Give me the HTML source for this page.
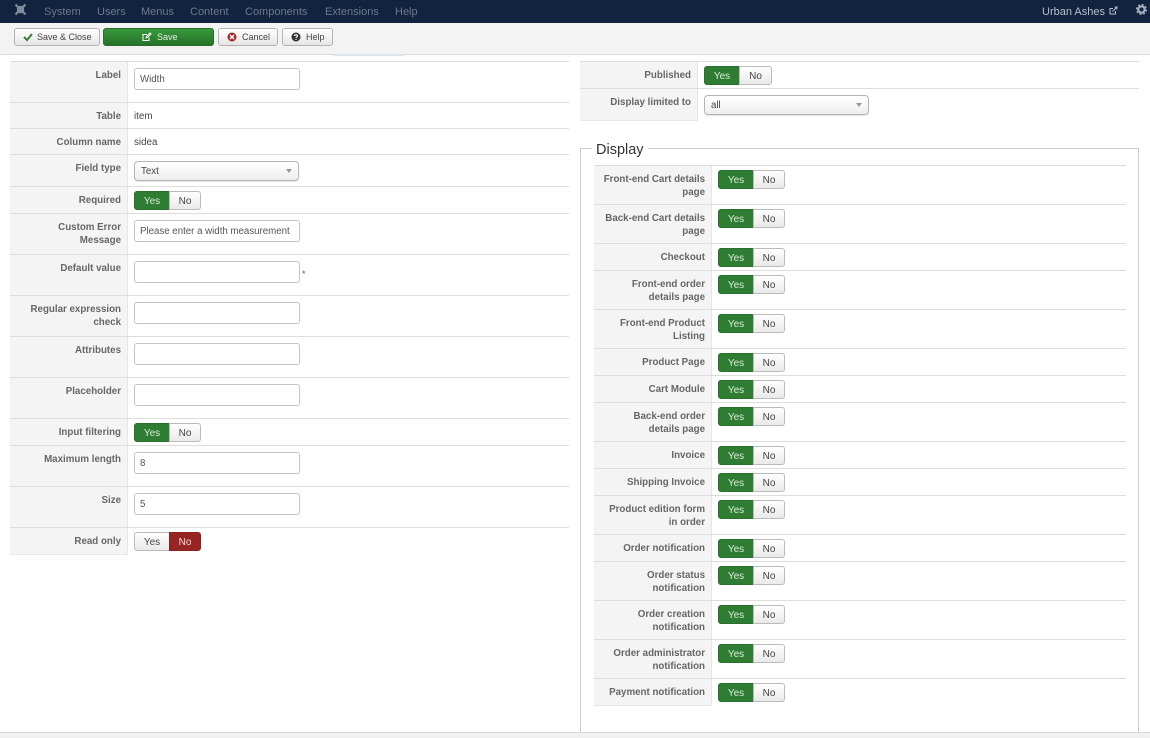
<!DOCTYPE html>
<html><head><meta charset="utf-8"><title>Field</title>
<style>
*{box-sizing:border-box}
html,body{margin:0;padding:0;width:1150px;height:738px;overflow:hidden;background:#fff;font-family:"Liberation Sans",sans-serif;font-size:10px;color:#555}
div,span{position:absolute}
#nav{left:0;top:0;width:1150px;height:23px;background:#11233f}
#nav span{top:6px;font-size:11px;line-height:13px;color:#6d7a8c;white-space:nowrap}
#bar{left:0;top:23px;width:1150px;height:32px;background:#f3f3f3;border-bottom:1px solid #dcdcdc}
.btn{top:28px;height:18px;border:1px solid #b3b3b3;border-radius:3px;background:linear-gradient(#fff,#e6e6e6);font-size:9px;line-height:16px;color:#444;white-space:nowrap}
.btn span{top:0;line-height:16px}
.btn svg{position:absolute}
.g{background:#2f8232;background:linear-gradient(#379a3b,#267129);border-color:#2a6b2d;color:#e4f0e4}
.h{height:1px;background:#ddd}
.side{background:#f4f4f4;border-right:1px solid #e6e6e6}
.l{font-size:9.75px;font-weight:bold;line-height:13px;color:#666;text-align:right;white-space:nowrap;margin-top:1px}
.in{left:134px;width:166px;height:22px;border:1px solid #c4c4c4;border-radius:3px;background:#fff;font-size:9.7px;line-height:22px;padding-left:5px;color:#555;white-space:nowrap}
.v{left:134px;font-size:9.8px;line-height:13px;color:#444;margin-top:1px}
.sel{height:20px;border:1px solid #b5b5b5;border-radius:4px;background:linear-gradient(#fff,#eee);box-shadow:0 1px 1px #e4e4e4;font-size:9.7px;line-height:20px;padding-left:6px;color:#444}
.sel i{position:absolute;right:6px;top:7px;width:0;height:0;border:3px solid transparent;border-top:4px solid #999;border-bottom:0}
.t{height:19px;width:67px;font-size:10px;line-height:19px;text-align:center}
.y,.n{top:0;height:19px;line-height:19px}
.y{left:0;width:36px;background:#2e7d32;color:#dcebdc;border-radius:3px 0 0 3px;border:1px solid #2a6f2d}
.n{left:35px;width:32px;background:linear-gradient(#fff,#e9e9e9);border:1px solid #bbb;border-radius:0 3px 3px 0;color:#444}
.y2{left:0;width:36px;background:linear-gradient(#fff,#e9e9e9);color:#444;border:1px solid #bbb;border-radius:3px 0 0 3px}
.n2{left:35px;width:32px;background:#962523;color:#f3dddd;border:1px solid #8c2220;border-radius:0 3px 3px 0}
</style></head><body>
<div id="nav">
<svg style="position:absolute;left:14px;top:3px" width="13" height="13" viewBox="0 0 13 13"><path d="M1.5 1.5L11.5 11.5M11.5 1.5L1.5 11.5M4 4H9V9H4Z" fill="none" stroke="#7f8a9a" stroke-width="2.2"/></svg>
<span style="left:44px">System</span><span style="left:97px">Users</span><span style="left:141px">Menus</span><span style="left:190px">Content</span><span style="left:245px">Components</span><span style="left:325px">Extensions</span><span style="left:395px">Help</span>
<span style="left:1042px;color:#b9c0ca">Urban Ashes</span>
<svg style="position:absolute;left:1109px;top:6px" width="9" height="9" viewBox="0 0 9 9"><path d="M6.5 5V8H1V2.5H4M3.5 5.5L8 1M5.5 1H8V3.5" fill="none" stroke="#b9c0ca" stroke-width="1"/></svg>
<svg style="position:absolute;left:1136px;top:4px" width="11" height="11" viewBox="0 0 11 11"><circle cx="5.5" cy="5.5" r="3.2" fill="none" stroke="#a9b1bd" stroke-width="2.2"/><circle cx="5.5" cy="5.5" r="4.9" fill="none" stroke="#a9b1bd" stroke-width="1.3" stroke-dasharray="2 1.85"/></svg>
</div>
<div id="bar"></div>
<div class="h" style="left:10px;top:54px;width:395px;background:#d8d8d8"></div>
<div style="left:334px;top:54px;width:71px;height:2px;background:#dde4ea"></div>

<div class="btn" style="left:14px;width:86px"><svg style="left:8px;top:3px" width="10" height="10" viewBox="0 0 10 10"><path d="M1 5L4 8L9 2" fill="none" stroke="#378137" stroke-width="2"/></svg><span style="left:22px">Save &amp; Close</span></div>
<div class="btn g" style="left:103px;width:111px"><svg style="left:38px;top:3px" width="10" height="10" viewBox="0 0 10 10"><path d="M7 5.5V8.5H1V2.5H5M4 6L4.5 4.5L8 1L9 2L5.5 5.5Z" fill="none" stroke="#fff" stroke-width="1"/></svg><span style="left:53px">Save</span></div>
<div class="btn" style="left:218px;width:60px"><svg style="left:8px;top:3px" width="10" height="10" viewBox="0 0 10 10"><circle cx="5" cy="5" r="4.5" fill="#a5282a"/><path d="M3 3L7 7M7 3L3 7" stroke="#fff" stroke-width="1.5"/></svg><span style="left:23px">Cancel</span></div>
<div class="btn" style="left:282px;width:51px"><svg style="left:8px;top:3px" width="10" height="10" viewBox="0 0 10 10"><circle cx="5" cy="5" r="4.5" fill="#333"/><path d="M3.5 4C3.5 2.5 6.5 2.5 6.5 4C6.5 5 5 5 5 6M5 7V8" fill="none" stroke="#fff" stroke-width="1.2"/></svg><span style="left:23px">Help</span></div>

<!-- Left form -->
<div class="side" style="left:10px;top:62px;width:118px;height:492px"></div>
<div class="h" style="left:10px;top:61px;width:559px"></div>
<div class="h" style="left:10px;top:102px;width:559px"></div>
<div class="h" style="left:10px;top:128px;width:559px"></div>
<div class="h" style="left:10px;top:154px;width:559px"></div>
<div class="h" style="left:10px;top:186px;width:559px"></div>
<div class="h" style="left:10px;top:213px;width:559px"></div>
<div class="h" style="left:10px;top:254px;width:559px"></div>
<div class="h" style="left:10px;top:295px;width:559px"></div>
<div class="h" style="left:10px;top:336px;width:559px"></div>
<div class="h" style="left:10px;top:377px;width:559px"></div>
<div class="h" style="left:10px;top:418px;width:559px"></div>
<div class="h" style="left:10px;top:445px;width:559px"></div>
<div class="h" style="left:10px;top:486px;width:559px"></div>
<div class="h" style="left:10px;top:527px;width:559px"></div>
<div class="h" style="left:10px;top:554px;width:118px;background:#e8e8e8"></div>

<div class="l" style="right:1029px;top:68px">Label</div>
<div class="in" style="top:68px">Width</div>
<div class="l" style="right:1029px;top:109px">Table</div>
<div class="v" style="top:109px">item</div>
<div class="l" style="right:1029px;top:135px">Column name</div>
<div class="v" style="top:135px">sidea</div>
<div class="l" style="right:1029px;top:161px">Field type</div>
<div class="sel" style="left:134px;top:161px;width:165px">Text<i></i></div>
<div class="l" style="right:1029px;top:193px">Required</div>
<div class="t" style="left:134px;top:191px"><span class="y">Yes</span><span class="n">No</span></div>
<div class="l" style="right:1029px;top:220px">Custom Error<br>Message</div>
<div class="in" style="top:220px">Please enter a width measurement</div>
<div class="l" style="right:1029px;top:261px">Default value</div>
<div class="in" style="top:261px"></div>
<div style="left:302px;top:269px;font-size:9px;color:#555">*</div>
<div class="l" style="right:1029px;top:302px">Regular expression<br>check</div>
<div class="in" style="top:302px"></div>
<div class="l" style="right:1029px;top:343px">Attributes</div>
<div class="in" style="top:343px"></div>
<div class="l" style="right:1029px;top:384px">Placeholder</div>
<div class="in" style="top:384px"></div>
<div class="l" style="right:1029px;top:425px">Input filtering</div>
<div class="t" style="left:134px;top:423px"><span class="y">Yes</span><span class="n">No</span></div>
<div class="l" style="right:1029px;top:452px">Maximum length</div>
<div class="in" style="top:452px">8</div>
<div class="l" style="right:1029px;top:493px">Size</div>
<div class="in" style="top:493px">5</div>
<div class="l" style="right:1029px;top:534px">Read only</div>
<div class="t" style="left:134px;top:532px"><span class="y y2">Yes</span><span class="n n2">No</span></div>

<!-- Right top -->
<div class="side" style="left:580px;top:62px;width:118px;height:58px"></div>
<div class="h" style="left:580px;top:61px;width:559px"></div>
<div class="h" style="left:580px;top:88px;width:559px"></div>
<div class="h" style="left:580px;top:120px;width:118px;background:#e8e8e8"></div>
<div class="l" style="right:459px;top:68px">Published</div>
<div class="t" style="left:704px;top:66px;width:68px"><span class="y">Yes</span><span class="n" style="width:33px">No</span></div>
<div class="l" style="right:459px;top:95px">Display limited to</div>
<div class="sel" style="left:704px;top:95px;width:165px">all<i></i></div>

<!-- Fieldset -->
<div style="left:580px;top:148px;width:559px;height:584px;border:1px solid #ccc;border-bottom:0"></div>
<div style="left:592px;top:141px;width:56px;height:16px;background:#fff"></div>
<div style="left:596px;top:142px;font-size:14.5px;line-height:17px;color:#333">Display</div>
<div class="side" style="left:594px;top:166px;width:118px;height:539px"></div>
<div class="h" style="left:594px;top:165px;width:532px"></div>
<div class="h" style="left:594px;top:204px;width:532px"></div>
<div class="h" style="left:594px;top:243px;width:532px"></div>
<div class="h" style="left:594px;top:270px;width:532px"></div>
<div class="h" style="left:594px;top:309px;width:532px"></div>
<div class="h" style="left:594px;top:348px;width:532px"></div>
<div class="h" style="left:594px;top:375px;width:532px"></div>
<div class="h" style="left:594px;top:402px;width:532px"></div>
<div class="h" style="left:594px;top:441px;width:532px"></div>
<div class="h" style="left:594px;top:468px;width:532px"></div>
<div class="h" style="left:594px;top:495px;width:532px"></div>
<div class="h" style="left:594px;top:534px;width:532px"></div>
<div class="h" style="left:594px;top:561px;width:532px"></div>
<div class="h" style="left:594px;top:600px;width:532px"></div>
<div class="h" style="left:594px;top:639px;width:532px"></div>
<div class="h" style="left:594px;top:678px;width:532px"></div>
<div class="h" style="left:594px;top:705px;width:118px;background:#e8e8e8"></div>

<div class="l" style="right:445px;top:172px">Front-end Cart details<br>page</div>
<div class="t" style="left:718px;top:170px"><span class="y">Yes</span><span class="n">No</span></div>
<div class="l" style="right:445px;top:211px">Back-end Cart details<br>page</div>
<div class="t" style="left:718px;top:209px"><span class="y">Yes</span><span class="n">No</span></div>
<div class="l" style="right:445px;top:250px">Checkout</div>
<div class="t" style="left:718px;top:248px"><span class="y">Yes</span><span class="n">No</span></div>
<div class="l" style="right:445px;top:277px">Front-end order<br>details page</div>
<div class="t" style="left:718px;top:275px"><span class="y">Yes</span><span class="n">No</span></div>
<div class="l" style="right:445px;top:316px">Front-end Product<br>Listing</div>
<div class="t" style="left:718px;top:314px"><span class="y">Yes</span><span class="n">No</span></div>
<div class="l" style="right:445px;top:355px">Product Page</div>
<div class="t" style="left:718px;top:353px"><span class="y">Yes</span><span class="n">No</span></div>
<div class="l" style="right:445px;top:382px">Cart Module</div>
<div class="t" style="left:718px;top:380px"><span class="y">Yes</span><span class="n">No</span></div>
<div class="l" style="right:445px;top:409px">Back-end order<br>details page</div>
<div class="t" style="left:718px;top:407px"><span class="y">Yes</span><span class="n">No</span></div>
<div class="l" style="right:445px;top:448px">Invoice</div>
<div class="t" style="left:718px;top:446px"><span class="y">Yes</span><span class="n">No</span></div>
<div class="l" style="right:445px;top:475px">Shipping Invoice</div>
<div class="t" style="left:718px;top:473px"><span class="y">Yes</span><span class="n">No</span></div>
<div class="l" style="right:445px;top:502px">Product edition form<br>in order</div>
<div class="t" style="left:718px;top:500px"><span class="y">Yes</span><span class="n">No</span></div>
<div class="l" style="right:445px;top:541px">Order notification</div>
<div class="t" style="left:718px;top:539px"><span class="y">Yes</span><span class="n">No</span></div>
<div class="l" style="right:445px;top:568px">Order status<br>notification</div>
<div class="t" style="left:718px;top:566px"><span class="y">Yes</span><span class="n">No</span></div>
<div class="l" style="right:445px;top:607px">Order creation<br>notification</div>
<div class="t" style="left:718px;top:605px"><span class="y">Yes</span><span class="n">No</span></div>
<div class="l" style="right:445px;top:646px">Order administrator<br>notification</div>
<div class="t" style="left:718px;top:644px"><span class="y">Yes</span><span class="n">No</span></div>
<div class="l" style="right:445px;top:685px">Payment notification</div>
<div class="t" style="left:718px;top:683px"><span class="y">Yes</span><span class="n">No</span></div>

<div style="left:0;top:732px;width:1150px;height:6px;background:#f0f0f0;border-top:1px solid #d8d8d8"></div>
</body></html>
